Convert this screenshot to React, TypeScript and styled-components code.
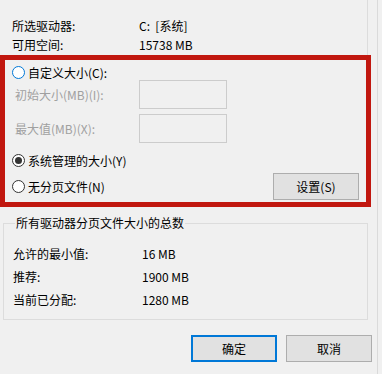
import React from 'react';
import styled, { createGlobalStyle } from 'styled-components';

const Global = createGlobalStyle`
  html, body { margin: 0; padding: 0; background: #f0f0f0; }
  body {
    font-family: "Noto Sans CJK SC", "Microsoft YaHei", sans-serif;
    font-size: 12px;
    color: #000;
  }
`;

const Page = styled.div`
  width: 382px;
  height: 374px;
  overflow: hidden;
  display: flex;
`;

const Dialog = styled.div`
  width: 378px;
  height: 374px;
  box-sizing: border-box;
  border-right: 1px solid #dadada;
  display: flex;
  flex-direction: column;
`;

const TopGroup = styled.div`
  width: 368px;
  box-sizing: border-box;
  border-right: 1px solid #dcdcdc;
  display: flex;
  flex-direction: column;
`;

const InfoGrid = styled.div<{ $col: number; $row: number; $pad: string }>`
  display: grid;
  grid-template-columns: ${(p) => p.$col}px auto;
  grid-auto-rows: ${(p) => p.$row}px;
  align-items: center;
  padding: ${(p) => p.$pad};
  white-space: pre;
`;

const RedBox = styled.div`
  width: 371px;
  box-sizing: border-box;
  margin-top: 1px;
  border: 5px solid #c1170f;
  padding: 5px 7px 2px 7px;
  display: flex;
  flex-direction: column;
`;

const Row = styled.div<{ $h: number; $mt?: number }>`
  display: flex;
  align-items: center;
  height: ${(p) => p.$h}px;
  margin-top: ${(p) => p.$mt ?? 0}px;
`;

const RadioCircle = styled.span<{ $checked?: boolean; $focus?: boolean }>`
  width: 13px;
  height: 13px;
  box-sizing: border-box;
  border-radius: 50%;
  border: 1px solid ${(p) => (p.$focus ? '#0078d7' : '#333')};
  background: #fff;
  display: flex;
  align-items: center;
  justify-content: center;
  margin-right: 3px;
  flex: none;
  &::after {
    content: '';
    display: ${(p) => (p.$checked ? 'block' : 'none')};
    width: 7px;
    height: 7px;
    border-radius: 50%;
    background: #333;
  }
`;

const FieldLabel = styled.span`
  width: 124px;
  margin-left: 3px;
  color: #a0a0a0;
`;

const DisabledInput = styled.div`
  width: 88px;
  height: 29px;
  box-sizing: border-box;
  border: 1px solid #cccccc;
  background: #f0f0f0;
`;

const Button = styled.button<{ $default?: boolean }>`
  width: 86px;
  height: 27px;
  box-sizing: border-box;
  margin-left: auto;
  padding: 0;
  font-family: inherit;
  font-size: 12px;
  color: #000;
  background: #e1e1e1;
  border: ${(p) => (p.$default ? '2px solid #0078d7' : '1px solid #adadad')};
  display: flex;
  align-items: center;
  justify-content: center;
`;

const GroupBox = styled.fieldset`
  margin: 9px 0 0 3px;
  width: 365px;
  box-sizing: border-box;
  padding: 12px 0 8px 9px;
  border: 1px solid #dcdcdc;
  min-inline-size: 0;
`;

const Legend = styled.legend`
  margin-left: 2px;
  padding: 0 1px;
  line-height: 14px;
`;

const ButtonBar = styled.div`
  display: flex;
  justify-content: flex-end;
  gap: 9px;
  margin-top: 15px;
  padding-right: 5px;
  & > button { margin-left: 0; }
`;

export default function App() {
  return (
    <>
      <Global />
      <Page>
        <Dialog>
          <TopGroup>
            <InfoGrid $col={127} $row={19} $pad="16px 0 0 12px">
              <span>所选驱动器:</span>
              <span>C:  [系统]</span>
              <span>可用空间:</span>
              <span>15738 MB</span>
            </InfoGrid>
            <RedBox>
              <Row $h={15}>
                <RadioCircle $focus />
                <span>自定义大小(C):</span>
              </Row>
              <Row $h={29}>
                <FieldLabel>初始大小(MB)(I):</FieldLabel>
                <DisabledInput />
              </Row>
              <Row $h={29} $mt={5}>
                <FieldLabel>最大值(MB)(X):</FieldLabel>
                <DisabledInput />
              </Row>
              <Row $h={18} $mt={8}>
                <RadioCircle $checked />
                <span>系统管理的大小(Y)</span>
              </Row>
              <Row $h={27} $mt={4}>
                <RadioCircle />
                <span>无分页文件(N)</span>
                <Button>设置(S)</Button>
              </Row>
            </RedBox>
          </TopGroup>
          <GroupBox>
            <Legend>所有驱动器分页文件大小的总数</Legend>
            <InfoGrid $col={129} $row={23} $pad="0">
              <span>允许的最小值:</span>
              <span>16 MB</span>
              <span>推荐:</span>
              <span>1900 MB</span>
              <span>当前已分配:</span>
              <span>1280 MB</span>
            </InfoGrid>
          </GroupBox>
          <ButtonBar>
            <Button $default>确定</Button>
            <Button>取消</Button>
          </ButtonBar>
        </Dialog>
      </Page>
    </>
  );
}
